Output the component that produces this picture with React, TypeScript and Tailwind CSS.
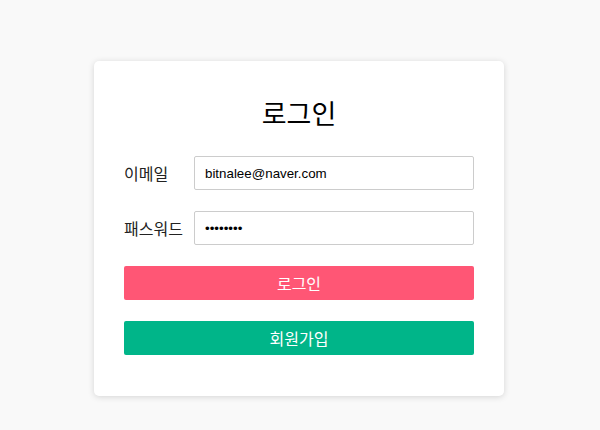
import React from 'react';

const font = { fontFamily: '"Noto Sans CJK KR", "Liberation Sans", sans-serif' };

export default function App() {
  return (
    <div className="w-[600px] h-[430px] bg-[#f9f9f9] flex justify-center pt-[61px] pr-[2px]" style={font}>
      <div className="w-[410px] h-[335px] bg-white rounded-[5px] shadow-[0_1px_6px_rgba(0,0,0,0.15)] px-[30px] pt-[32px] pb-[40px] flex flex-col">
        {/* Title */}
        <h1 className="text-center text-[27px] leading-[40px] text-black mb-[23px]">로그인</h1>

        {/* Fields */}
        <div className="flex items-center h-[34px] mb-[21px]">
          <label className="w-[70px] text-[16px] text-[#222]">이메일</label>
          <input
            readOnly
            value="bitnalee@naver.com"
            className="flex-1 h-[34px] border border-[#cccccc] rounded-[2px] px-[10px] text-[13.333px] text-black outline-none"
            style={{ fontFamily: '"Liberation Sans", Arial, sans-serif' }}
          />
        </div>
        <div className="flex items-center h-[34px] mb-[21px]">
          <label className="w-[70px] text-[16px] text-[#222]">패스워드</label>
          <input
            readOnly
            type="password"
            value="12345678"
            className="flex-1 h-[34px] border border-[#cccccc] rounded-[2px] px-[10px] text-[13.333px] text-black outline-none"
            style={{ fontFamily: '"Liberation Sans", Arial, sans-serif' }}
          />
        </div>

        {/* Buttons */}
        <button className="h-[34px] w-full bg-[#ff5675] text-white text-[16px] rounded-[2px] mb-[21px]">로그인</button>
        <button className="h-[34px] w-full bg-[#00b589] text-white text-[16px] rounded-[2px]">회원가입</button>
      </div>
    </div>
  );
}
